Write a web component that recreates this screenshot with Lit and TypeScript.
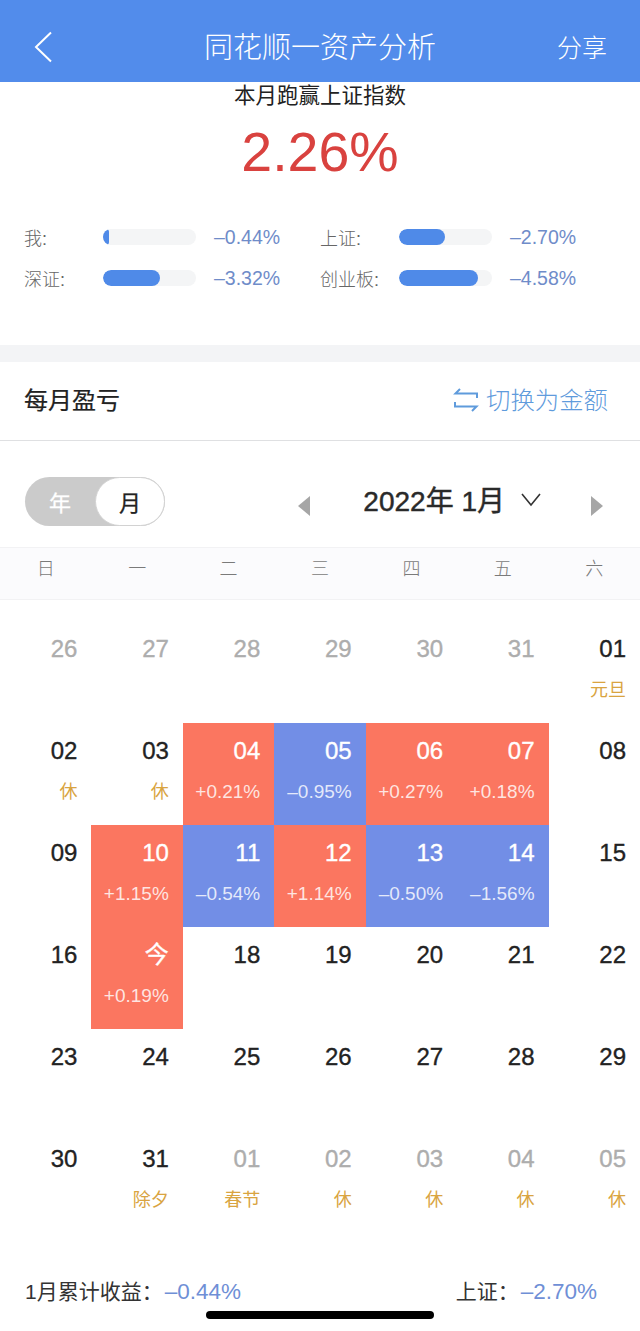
import { LitElement, html, css, svg } from "lit";
import { customElement } from "lit/decorators.js";

type Cell = { n: string; tone?: "muted" | "up" | "down"; sub?: string; tag?: string };

const up = (n: string, sub: string): Cell => ({ n, tone: "up", sub });
const down = (n: string, sub: string): Cell => ({ n, tone: "down", sub });
const muted = (n: string, tag?: string): Cell => ({ n, tone: "muted", tag });
const plain = (n: string, tag?: string): Cell => ({ n, tag });

const CELLS: Cell[] = [
  muted("26"), muted("27"), muted("28"), muted("29"), muted("30"), muted("31"), plain("01", "元旦"),
  plain("02", "休"), plain("03", "休"), up("04", "+0.21%"), down("05", "–0.95%"), up("06", "+0.27%"), up("07", "+0.18%"), plain("08"),
  plain("09"), up("10", "+1.15%"), down("11", "–0.54%"), up("12", "+1.14%"), down("13", "–0.50%"), down("14", "–1.56%"), plain("15"),
  plain("16"), up("今", "+0.19%"), plain("18"), plain("19"), plain("20"), plain("21"), plain("22"),
  plain("23"), plain("24"), plain("25"), plain("26"), plain("27"), plain("28"), plain("29"),
  plain("30"), plain("31", "除夕"), muted("01", "春节"), muted("02", "休"), muted("03", "休"), muted("04", "休"), muted("05", "休"),
];

const BARS = [
  { label: "我:", fill: 6, value: "–0.44%" },
  { label: "上证:", fill: 46, value: "–2.70%" },
  { label: "深证:", fill: 57, value: "–3.32%" },
  { label: "创业板:", fill: 79, value: "–4.58%" },
];

const WEEK = ["日", "一", "二", "三", "四", "五", "六"];

@customElement("app-root")
export class AppRoot extends LitElement {
  static styles = css`
    :host {
      display: block;
      width: 640px;
      height: 1331px;
      overflow: hidden;
      position: relative;
      background: #fff;
      color: #222;
      font-family: "Liberation Sans", "Noto Sans CJK SC", sans-serif;
    }
    .nav {
      height: 82px;
      background: #528ceb;
      color: #fff;
      display: grid;
      grid-template-columns: 120px 1fr 120px;
      align-items: center;
      padding-top: 13px;
      box-sizing: border-box;
    }
    .back { padding-left: 33px; display: flex; margin-top: -1px; }
    .title { text-align: center; font-size: 29px; font-weight: 300; line-height: 32px; }
    .share { text-align: right; padding-right: 33px; font-size: 25px; font-weight: 300; line-height: 32px; }
    .summary { height: 263px; box-sizing: border-box; display: flex; flex-direction: column; align-items: center; padding-top: 1px; }
    .sub-title { font-size: 21.5px; line-height: 26px; color: #222; }
    .big { font-size: 55.5px; line-height: 60px; color: #d9423f; margin-top: 13px; }
    .bars {
      align-self: stretch;
      display: grid;
      grid-template-columns: 296px 320px;
      row-gap: 23px;
      padding-left: 24px;
      margin-top: 46px;
    }
    .bar-item { display: flex; align-items: center; height: 18px; }
    .bar-label { width: 79px; font-size: 18px; color: #666; font-weight: 300; }
    .item-right .bar-label { width: 80px; }
    .track { width: 93px; height: 16px; border-radius: 8px; background: #f4f5f6; overflow: hidden; }
    .fill { height: 100%; background: #4f8ae8; border-radius: 8px; }
    .bar-value { margin-left: 18px; font-size: 19.5px; color: #6f8cc9; }
    .band { height: 17px; background: #f3f4f6; }
    .head {
      height: 79px;
      box-sizing: border-box;
      border-bottom: 1px solid #dfe0e2;
      display: flex;
      align-items: center;
      justify-content: space-between;
      padding: 0 32px 5px 24px;
    }
    .head-title { font-size: 24px; color: #222; -webkit-text-stroke: 0.2px #222; }
    .swap { display: flex; align-items: center; gap: 7px; color: #5f9bdc; font-size: 24.4px; font-weight: 300; }
    .swap svg { margin-top: 2px; }
    .controls { height: 106px; position: relative; display: flex; align-items: center; padding: 15px 37px 0 25px; box-sizing: border-box; }
    .toggle {
      width: 140px;
      height: 49px;
      box-sizing: border-box;
      border-radius: 25px;
      background: #cbcbcb;
      display: flex;
      font-size: 22px;
      -webkit-text-stroke: 0.3px currentColor;
    }
    .toggle span { display: flex; align-items: center; justify-content: center; padding-bottom: 2px; box-sizing: border-box; }
    .t-year { width: 70px; color: #fff; }
    .t-month {
      width: 70px;
      background: #fff;
      border: 1.5px solid #d2d2d2;
      border-radius: 25px;
      color: #222;
    }
    .months { margin-left: auto; display: flex; align-items: center; }
    .months .label { font-size: 28px; margin-left: 53px; color: #2a2a2a; line-height: 34px; -webkit-text-stroke: 0.45px #2a2a2a; }
    .months .caret { margin-left: 16px; margin-right: 50px; display: flex; margin-top: -4px; }
    .arrow { display: flex; margin-top: 9px; }
    .week {
      height: 53px;
      box-sizing: border-box;
      display: grid;
      grid-template-columns: repeat(7, 1fr);
      align-items: center;
      text-align: center;
      background: #fbfbfd;
      border-top: 1px solid #f2f2f4;
      border-bottom: 1px solid #f2f2f4;
      font-size: 18px;
      color: #7a7a7a;
      font-weight: 300;
      padding-bottom: 14px;
    }
    .cal { display: grid; grid-template-columns: repeat(7, 1fr); grid-auto-rows: 102px; margin-top: 21px; }
    .cell {
      box-sizing: border-box;
      padding: 13px 14px 0 0;
      text-align: right;
      color: #222;
    }
    .cell .n { font-size: 24px; line-height: 30px; -webkit-text-stroke: 0.35px currentColor; }
    .cell .s { font-size: 19px; line-height: 24px; margin-top: 14px; color: rgba(255, 255, 255, 0.82); white-space: nowrap; }
    .cell .g { font-size: 18px; line-height: 24px; margin-top: 14px; color: #d9a441; font-weight: 400; }
    .muted .n { color: #adadad; }
    .up { background: #fb7660; color: #fff; }
    .down { background: #728ee6; color: #fff; }
    .foot {
      display: flex;
      justify-content: space-between;
      padding: 45px 43px 0 25px;
      font-size: 21px;
      line-height: 28px;
      color: #333;
    }
    .foot b { font-weight: 400; color: #6f8fd6; font-size: 22.5px; margin-left: 2px; }
    .home {
      position: absolute;
      left: 206px;
      top: 1311px;
      width: 228px;
      height: 8px;
      border-radius: 4px;
      background: #000;
    }
  `;

  render() {
    return html`
      <div class="nav">
        <div class="back">
          <svg width="20" height="32" viewBox="0 0 20 32" fill="none" stroke="#fff" stroke-width="2">
            <path d="M18 1.5 L3 16 L18 30.5" />
          </svg>
        </div>
        <div class="title">同花顺一资产分析</div>
        <div class="share">分享</div>
      </div>

      <section class="summary">
        <div class="sub-title">本月跑赢上证指数</div>
        <div class="big">2.26%</div>
        <div class="bars">
          ${BARS.map(
            (b) => html`
              <div class="bar-item">
                <span class="bar-label">${b.label}</span>
                <div class="track"><div class="fill" style="width:${b.fill}px"></div></div>
                <span class="bar-value">${b.value}</span>
              </div>
            `
          )}
        </div>
      </section>

      <div class="band"></div>

      <div class="head">
        <div class="head-title">每月盈亏</div>
        <div class="swap">
          <svg width="26" height="26" viewBox="0 0 26 26" fill="none" stroke="#5f9bdc" stroke-width="2">
            ${svg`<path d="M7 2 L2.5 6.5 H24 V11" /><path d="M19 24 L23.5 19.5 H2 V15" />`}
          </svg>
          <span>切换为金额</span>
        </div>
      </div>

      <div class="controls">
        <div class="toggle">
          <span class="t-year">年</span>
          <span class="t-month">月</span>
        </div>
        <div class="months">
          <span class="arrow">
            <svg width="12" height="20" viewBox="0 0 12 20"><path d="M12 0 V20 L0 10 Z" fill="#a6a6a6" /></svg>
          </span>
          <span class="label">2022年 1月</span>
          <span class="caret">
            <svg width="20" height="14" viewBox="0 0 20 14" fill="none" stroke="#333" stroke-width="1.6"><path d="M1 1 L10 12 L19 1" /></svg>
          </span>
          <span class="arrow">
            <svg width="12" height="20" viewBox="0 0 12 20"><path d="M0 0 V20 L12 10 Z" fill="#a6a6a6" /></svg>
          </span>
        </div>
      </div>

      <div class="week">${WEEK.map((d) => html`<span>${d}</span>`)}</div>

      <div class="cal">
        ${CELLS.map(
          (c) => html`
            <div class="cell ${c.tone ?? ""}">
              <div class="n">${c.n}</div>
              ${c.sub ? html`<div class="s">${c.sub}</div>` : ""}
              ${c.tag ? html`<div class="g">${c.tag}</div>` : ""}
            </div>
          `
        )}
      </div>

      <div class="foot">
        <span>1月累计收益：<b>–0.44%</b></span>
        <span>上证：<b>–2.70%</b></span>
      </div>
      <div class="home"></div>
    `;
  }
}
